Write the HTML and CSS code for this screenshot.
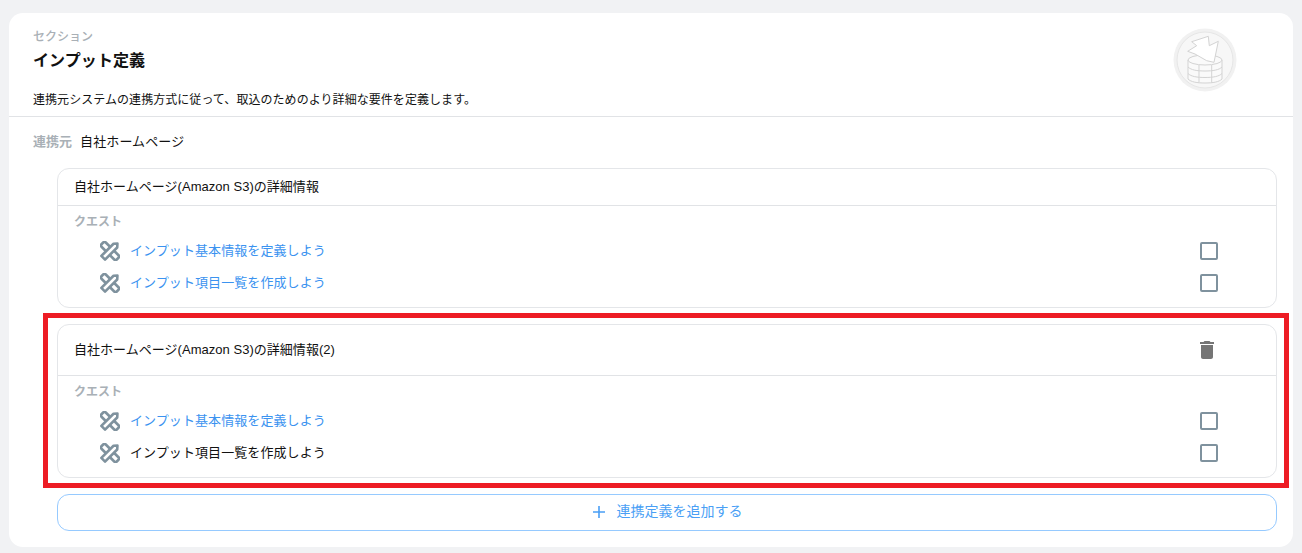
FILE: index.html
```
<!DOCTYPE html>
<html lang="ja">
<head>
<meta charset="utf-8">
<title>インプット定義</title>
<link rel="stylesheet" href="styles.css">
</head>
<body>
<svg class="defs" width="0" height="0" aria-hidden="true">
  <symbol id="tools" viewBox="0 0 20 20">
    <rect x="7" y="-0.800" width="6" height="21.600" rx="1.800" transform="rotate(-45 10 10)"/>
    <path d="M7.400 19.600V2.400L10 -0.500l2.600 2.900v17.200z" stroke-linejoin="round" transform="rotate(45 10 10)"/>
  </symbol>
</svg>
<main class="panel">
  <header class="panel-head">
    <div class="panel-titles">
      <div class="eyebrow">セクション</div>
      <h1 class="title">インプット定義</h1>
      <p class="desc">連携元システムの連携方式に従って、取込のためのより詳細な要件を定義します。</p>
    </div>
    <svg class="badge" viewBox="0 0 64 64" width="64" height="64" aria-hidden="true">
      <circle cx="32" cy="32" r="31.500" fill="#f1f1f1"/>
      <circle cx="32" cy="32" r="28" fill="#f7f7f7" stroke="#e6e6e6"/>
      <g fill="#fafafa" stroke="#d3d3d3" stroke-width="1" stroke-linejoin="round">
        <path d="M15 32v19c3 3 9 4 17 4s14-1 17-4V32z"/>
        <ellipse cx="32" cy="32" rx="17" ry="5"/>
        <path d="M15 39c3 3 9 4 17 4s14-1 17-4M15 45.500c3 3 9 4 17 4s14-1 17-4M26 37v17.500M38.700 37v17.500" fill="none"/>
        <path d="M18.700 13.700L35.300 8.300l1 9.400 9-4.400L41 34.300l-7.300-1.600L22 26l-7.300-2.700 9-5.600z" fill="#ffffff"/>
      </g>
    </svg>
  </header>

  <div class="panel-body">
    <div class="source">
      <span class="source-label">連携元</span>
      <span class="source-value">自社ホームページ</span>
    </div>

    <section class="detail">
      <div class="detail-head"><span class="detail-name">自社ホームページ(Amazon S3)の詳細情報</span></div>
      <div class="detail-body">
        <div class="quest-label">クエスト</div>
        <div class="quest">
          <svg class="tool"><use href="#tools"/></svg>
          <a class="quest-text link">インプット基本情報を定義しよう</a>
          <span class="check"></span>
        </div>
        <div class="quest">
          <svg class="tool"><use href="#tools"/></svg>
          <a class="quest-text link">インプット項目一覧を作成しよう</a>
          <span class="check"></span>
        </div>
      </div>
    </section>

    <section class="detail detail-marked">
      <div class="detail-head detail-head-tall">
        <span class="detail-name">自社ホームページ(Amazon S3)の詳細情報(2)</span>
        <svg class="trash" viewBox="0 0 24 24" width="24" height="24" aria-hidden="true"><path d="M6 19c0 1.100.9 2 2 2h8c1.100 0 2-.9 2-2V7H6v12zM19 4h-3.500l-1-1h-5l-1 1H5v2h14V4z"/></svg>
      </div>
      <div class="detail-body">
        <div class="quest-label">クエスト</div>
        <div class="quest">
          <svg class="tool"><use href="#tools"/></svg>
          <a class="quest-text link">インプット基本情報を定義しよう</a>
          <span class="check"></span>
        </div>
        <div class="quest">
          <svg class="tool"><use href="#tools"/></svg>
          <span class="quest-text">インプット項目一覧を作成しよう</span>
          <span class="check"></span>
        </div>
      </div>
      <div class="marker"></div>
    </section>

    <button class="add" type="button">
      <svg class="add-icon" viewBox="0 0 14 14" width="14" height="14" aria-hidden="true"><path d="M7 1v12M1 7h12" stroke="#4a9ff5" stroke-width="1.600" fill="none"/></svg>
      <span class="add-text">連携定義を追加する</span>
    </button>
  </div>
</main>
</body>
</html>
```
FILE: styles.css
```
* { box-sizing: border-box; }
html, body { margin: 0; height: 100%; }
body {
  background: #f1f2f4;
  padding: 13px 9px 6px;
  font-family: "Liberation Sans", "Noto Sans CJK JP", sans-serif;
  color: #111;
  overflow: hidden;
}
.defs { position: absolute; }
.panel {
  background: #fff;
  border-radius: 14px;
  height: 534px;
}
.panel-head {
  display: flex;
  justify-content: space-between;
  height: 104px;
  padding: 15px 56px 0 24px;
  border-bottom: 1px solid #e1e3e6;
}
.eyebrow { font-size: 12px; line-height: 18px; font-weight: 500; color: #a9b0b6; }
.title { margin: 3px 0 0; font-size: 16px; line-height: 24px; font-weight: 700; color: #111; letter-spacing: .1px; }
.desc { margin: 18px 0 0; font-size: 12px; line-height: 18px; letter-spacing: .055px; }
.badge { flex: none; }
.panel-body { padding: 0 16px 0 48px; }
.source {
  display: flex;
  align-items: center;
  gap: 8px;
  height: 20px;
  margin: 13px 0 18px -24px;
  font-size: 13px;
}
.source-label { font-weight: 700; color: #a9b0b6; }
.source-value { letter-spacing: .12px; }
.detail {
  position: relative;
  background: #fff;
  border: 1px solid #e4e6e9;
  border-radius: 12px;
  margin-bottom: 16px;
}
.detail-head {
  display: flex;
  align-items: center;
  justify-content: space-between;
  height: 37px;
  padding: 0 57px 0 16px;
  font-size: 13px;
  border-bottom: 1px solid #e1e3e6;
}
.detail-name { margin-bottom: 4px; letter-spacing: .03px; }
.detail-head-tall { height: 51px; }
.trash { fill: #757575; flex: none; }
.detail-body { padding: 7px 58px 8px 16px; }
.quest-label { font-size: 12px; line-height: 18px; font-weight: 700; color: #a9b0b6; margin-bottom: 4px; }
.quest {
  display: flex;
  align-items: center;
  height: 32px;
  padding-left: 26px;
  font-size: 13px;
}
.tool { width: 20px; height: 20px; flex: none; fill: #fff; stroke: #7f929e; stroke-width: 2.600; overflow: visible; }
.quest-text { margin: 0 0 4px 10px; flex: 1; letter-spacing: .08px; }
.link { color: #3b93f0; }
.check {
  width: 18px;
  height: 18px;
  border: 2px solid #7f929e;
  border-radius: 2px;
  flex: none;
}
.marker {
  position: absolute;
  left: -15px;
  right: -13px;
  top: -12px;
  bottom: -11px;
  border: 5px solid #ed1c24;
  pointer-events: none;
}
.add {
  display: flex;
  align-items: center;
  justify-content: center;
  gap: 11px;
  width: 100%;
  height: 37px;
  background: #fff;
  border: 1px solid #96caff;
  border-radius: 12px;
  color: #4a9ff5;
  font-family: inherit;
  font-size: 14px;
}
.add-icon { margin-bottom: 1px; }
.add-text { margin-bottom: 5px; }
```
